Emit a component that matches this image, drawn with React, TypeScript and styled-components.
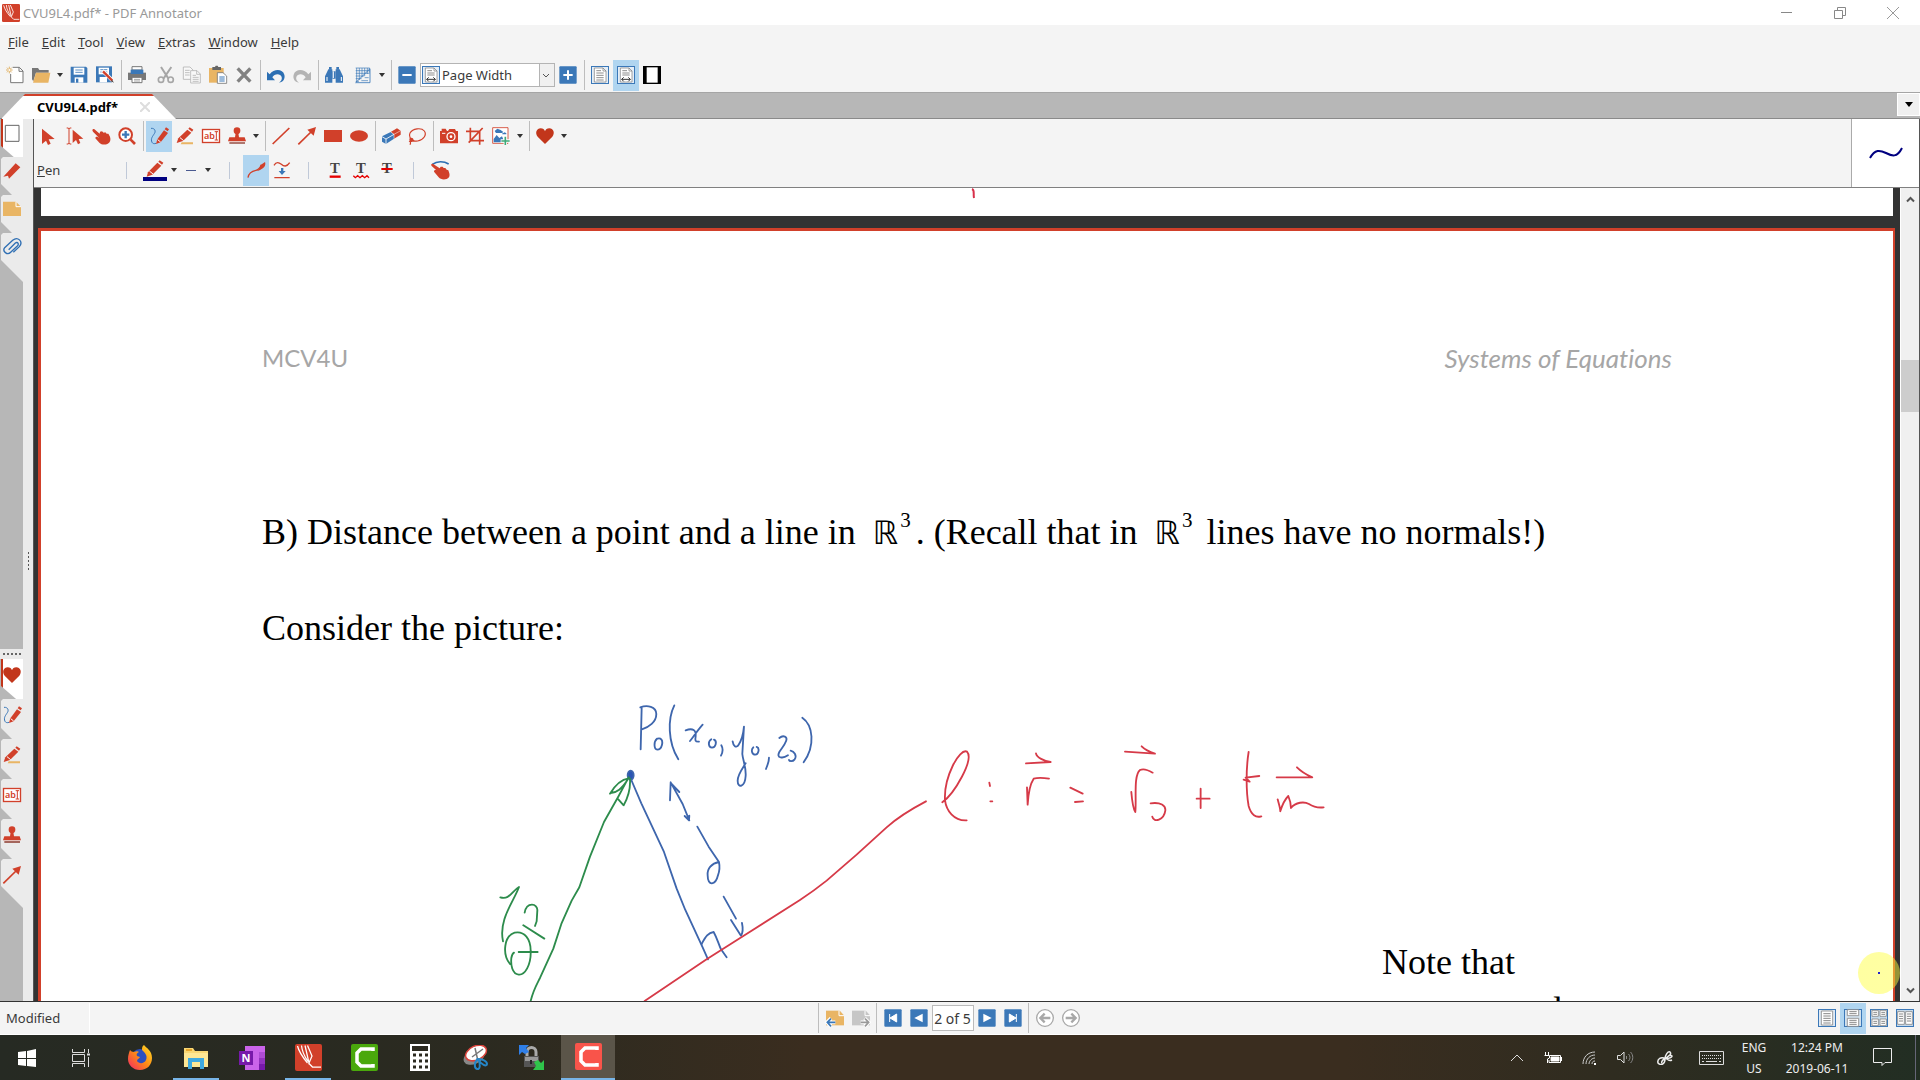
import React from 'react';
import styled, { createGlobalStyle, css } from 'styled-components';

const RED = '#d1402a';
const BLUE = '#3b78b8';
const GREY = '#a6a6a6';
const DARK = '#454545';
const UI = `'Noto Sans', 'Open Sans', sans-serif`;

const Global = createGlobalStyle`
  *, *::before, *::after { box-sizing: border-box; }
  html, body { margin: 0; height: 100%; }
  body { font-family: ${UI}; font-size: 13px; color: #3a3a3a; background: #333; overflow: hidden; }
  button, input, select { font: inherit; color: inherit; margin: 0; padding: 0; border: 0; background: none; border-radius: 0; }
  svg { display: block; flex: none; }
`;

/* ---------- icons, drawn on a 54 unit grid ---------- */

const Glyph = styled.svg.attrs({ viewBox: '0 0 54 54', fill: 'none', 'aria-hidden': true })<{ $size?: number }>`
  width: ${p => p.$size ?? 18}px;
  height: ${p => p.$size ?? 18}px;
  overflow: visible;
`;

const pencil = (
  <>
    <path d="M18 51l4-14L42 10l12 8-22 28z" fill={RED} />
    <path d="M44 7l4-6 9 6-4 6z" fill={RED} />
    <path d="M23 38l9 7" stroke="#fff" strokeWidth="3" />
  </>
);

const pageLines = (
  <>
    <rect x="1.500" y="1.500" width="51" height="51" fill="#e4eef8" stroke={BLUE} strokeWidth="3" />
    <path d="M10 6h26l9 9v33H10z" fill="#fff" stroke="#777" strokeWidth="2" />
    <path d="M36 6v9h9" stroke="#777" strokeWidth="2" />
  </>
);

const art: Record<string, React.ReactNode> = {
  app: (
    <>
      <rect width="54" height="54" rx="4" fill={RED} />
      <path d="M5 4c3 12 10 22 20 34M13 3c1 12 6 22 13 32M20 3l8 35 6-14L25 3M27 38l8 8h17" stroke="#fff" strokeWidth="2.500" />
    </>
  ),
  fresh: (
    <>
      <path d="M20 4h20l11 11v35H14V24" fill="#fff" stroke="#777" strokeWidth="3" />
      <path d="M39 4v12h12" stroke="#777" strokeWidth="3" />
      <path d="M10 2v20M0 12h20M3 5l14 14M17 5L3 19" stroke="#e0a84e" strokeWidth="2.500" />
      <circle cx="10" cy="12" r="3" fill="#fff" />
    </>
  ),
  open: (
    <>
      <path d="M0 6h18l4 6h28v8H12L4 46 0 40z" fill="#777" />
      <path d="M12 20h43l-6 30H3z" fill="#e9b564" />
    </>
  ),
  save: (
    <>
      <path d="M2 2h46l4 4v44H2z" fill={BLUE} />
      <path d="M11 5h32v21H11z" fill="#fff" />
      <path d="M16 12h22M16 19h22" stroke={BLUE} strokeWidth="2.500" />
      <path d="M14 34h26v16H14z" fill="#fff" />
      <path d="M18 38h7v12h-7z" fill={BLUE} />
    </>
  ),
  saveAs: (
    <>
      <path d="M0 1h48v48H0z" fill={BLUE} />
      <path d="M8 5h31v20H8z" fill="#fff" />
      <path d="M13 11h21M13 18h21" stroke={BLUE} strokeWidth="2.500" />
      <path d="M11 33h22v16H11z" fill="#fff" />
      <path d="M19 14l31 30" stroke="#fff" strokeWidth="11" />
      <path d="M21 16l28 28" stroke={RED} strokeWidth="7" />
      <path d="M48 41l6 9-9-4z" fill="#444" />
    </>
  ),
  print: (
    <>
      <path d="M0 20h54v22H0z" fill="#777" />
      <path d="M12 2h30v10H12z" fill="#fff" stroke="#777" strokeWidth="3" />
      <path d="M8 11h38v13H8z" fill={BLUE} />
      <path d="M12 34h30v16H12z" fill="#fff" stroke="#777" strokeWidth="3" />
      <path d="M18 40h18M18 45h18" stroke="#777" strokeWidth="2" />
    </>
  ),
  cut: (
    <g stroke={GREY} strokeWidth="5">
      <path d="M12 3l22 34M43 3L20 37" strokeWidth="6" />
      <circle cx="12" cy="41" r="8" />
      <circle cx="41" cy="41" r="8" />
    </g>
  ),
  copy: (
    <g stroke="#b4b4b4" strokeWidth="2.500">
      <path d="M1 3h20l9 9v28H1z" fill="#f8f8f8" />
      <path d="M6 13h14M6 20h14M6 27h14" />
      <path d="M23 14h19l10 10v27H23z" fill="#f8f8f8" />
      <path d="M41 14v11h11M29 28h10M29 34h18M29 40h18M29 46h18" />
    </g>
  ),
  paste: (
    <>
      <path d="M0 6h44v44H0z" fill="#e9b564" />
      <path d="M10 3h8l2-4h6l2 4h8v9H10z" fill="#666" />
      <path d="M25 20h17l11 10v22H25z" fill="#fff" stroke="#777" strokeWidth="2.500" />
      <path d="M31 33h16M31 39h16M31 45h16" stroke={BLUE} strokeWidth="3" />
    </>
  ),
  remove: <path d="M8 7l38 40M46 7L8 47" stroke="#828282" strokeWidth="10" />,
  undo: <path d="M0 17v26h24l-8-9c6-12 24-13 28-1 2 7-2 13-8 17 13-2 19-13 16-24C47 9 22 7 8 25z" fill="#2c6fb3" />,
  redo: <path d="M54 17v26H30l8-9c-6-12-24-13-28-1-2 7 2 13 8 17C5 48-1 37 2 26 7 9 32 7 46 25z" fill="#b4b4b4" />,
  find: (
    <>
      <path d="M10 10h12v40H0V31zM44 10H32v40h22V31z" fill={BLUE} />
      <path d="M12 3h8v8h-8zM34 3h8v8h-8zM22 16h10v22H22z" fill={BLUE} />
      <path d="M25 16v20M6 33v12M49 33v12" stroke="#fff" strokeWidth="3" />
    </>
  ),
  grid: (
    <>
      <path d="M5 6h42M5 14h42M5 22h42M5 30h26M5 38h18M5 46h10M8 6v42M16 6v36M24 6v28M32 6v24M40 6v18M46 6v14" stroke={BLUE} strokeWidth="2" />
      <path d="M5 50L48 8v42z" stroke={BLUE} strokeWidth="2.500" />
      <path d="M22 44h20M32 35h12" stroke={BLUE} strokeWidth="2" />
    </>
  ),
  minus: (
    <>
      <rect x="1" y="1" width="52" height="52" rx="3" fill={BLUE} />
      <path d="M13 27h28" stroke="#fff" strokeWidth="6" />
    </>
  ),
  plus: (
    <>
      <rect x="1" y="1" width="52" height="52" rx="3" fill={BLUE} />
      <path d="M13 27h28M27 13v28" stroke="#fff" strokeWidth="6" />
    </>
  ),
  fullPage: (
    <>
      {pageLines}
      <path d="M16 14h14M16 21h22M16 28h22M16 35h22M16 42h22" stroke="#777" strokeWidth="2.500" />
    </>
  ),
  pageWidth: (
    <>
      {pageLines}
      <path d="M16 14h14M16 21h22M16 27h22" stroke="#777" strokeWidth="2.500" />
      <path d="M14 40h26M20 34l-6 6 6 6M34 34l6 6-6 6" stroke="#333" strokeWidth="3" />
    </>
  ),
  blackPage: (
    <>
      <path d="M0 0h54v54H0z" fill="#000" />
      <path d="M11 4h33v46H11z" fill="#fff" />
    </>
  ),
  pointer: <path d="M6 5v46l12-10 6 13 8-4-6-13 18-1z" fill={RED} />,
  textPointer: (
    <>
      <path d="M2 3h4l3 2 3-2h4M2 51h4l3-2 3 2h4M9 5v44" stroke={RED} strokeWidth="3" />
      <path d="M20 8v40l10-9 6 13 7-4-5-12 14-1z" fill={RED} />
    </>
  ),
  hand: (
    <path d="M1 10c1-5 6-5 9-1l13 11 1-6 6-1 5 4 5-1 4 4 5 0 5 9c3 10 1 17-8 22-9 4-19 1-24-4L10 34c0-4 4-6 8-3l3 1L3 14z" fill={RED} />
  ),
  zoomIn: (
    <>
      <circle cx="23" cy="23" r="19" fill="#fff" stroke={RED} strokeWidth="6" />
      <path d="M38 38l13 13" stroke={RED} strokeWidth="8" />
      <path d="M12 23h22M23 12v22" stroke={BLUE} strokeWidth="7" />
    </>
  ),
  pen: (
    <>
      {pencil}
      <path d="M3 4c12-1 15 9 10 16-5 8-12 15-7 26 2 4 7 5 12 3" stroke={BLUE} strokeWidth="3" />
    </>
  ),
  marker: (
    <>
      <path d="M17 46h34v6H14z" fill="#e9b564" />
      <path d="M2 48l5-14L34 8l12 9-25 25z" fill={RED} />
      <path d="M37 5l4-4 11 7-4 6z" fill={RED} />
      <path d="M12 32l11 9" stroke="#fff" strokeWidth="3" />
    </>
  ),
  textBox: (
    <>
      <rect x="1.500" y="7.500" width="51" height="39" fill="#fff" stroke={RED} strokeWidth="4" />
      <text x="6" y="37" fontFamily="Noto Sans, sans-serif" fontSize="27" fontWeight="600" fill={RED}>ab</text>
      <path d="M38 14h10M38 39h10M43 14v25" stroke={RED} strokeWidth="3" />
    </>
  ),
  stamp: (
    <>
      <circle cx="27" cy="11" r="10" fill={RED} />
      <path d="M23 18h8l2 13h-12zM4 31h46l4 12H0z" fill={RED} />
      <path d="M4 48h47" stroke="#8c3a2e" strokeWidth="4" />
    </>
  ),
  line: <path d="M2 51L52 3" stroke={RED} strokeWidth="5" />,
  arrow: (
    <>
      <path d="M1 52L42 12" stroke={RED} strokeWidth="5" />
      <path d="M54 0L47 26 28 8z" fill={RED} />
    </>
  ),
  rect: <path d="M0 9h54v36H0z" fill={RED} />,
  ellipse: <ellipse cx="27" cy="27" rx="27" ry="17" fill={RED} />,
  eraser: (
    <>
      <path d="M0 28l26-13 10 7v13L12 51 0 44z" fill={BLUE} />
      <path d="M26 15l19-11 11 7v12L36 35V22z" fill={RED} />
      <path d="M0 29l12 7 24-14M12 36v15" stroke="#fff" strokeWidth="2.500" />
      <path d="M36 22l20-11M26 15l10 7v13" stroke="#fff" strokeWidth="1.500" />
    </>
  ),
  lasso: <path d="M20 42C7 38 1 28 6 18 14 4 40 1 49 12c8 11-2 27-20 30-9 1-20 1-23-4-2-5 8-6 9 0 1 6-7 6-12 4 5 2 6 5 3 11" stroke={RED} strokeWidth="3.500" />,
  camera: (
    <>
      <path d="M0 12h5V5h12l4 7h3l4-6h17l3 6h6v37H0z" fill={RED} />
      <circle cx="33" cy="29" r="12" fill={RED} stroke="#fff" strokeWidth="4" />
      <circle cx="33" cy="29" r="4" fill="#fff" />
      <path d="M6 19h10" stroke="#fff" strokeWidth="3" />
    </>
  ),
  crop: <path d="M0 13h41v40M13 2v39h41M50 3L8 47" stroke={RED} strokeWidth="5" />,
  picture: (
    <>
      <path d="M2 2h46v47H2z" fill="#fff" stroke={RED} strokeWidth="2.500" />
      <path d="M5 46V36l9-12 8 9 8-5 8 18zM8 12l8-7 10 4 8 6-4 3H12zM30 20l8-4 5 3v3H31z" fill={BLUE} />
      <path d="M26 42h28M40 28v26" stroke="#fff" strokeWidth="10" />
      <path d="M28 42h25M40 29v25" stroke="#3fa878" strokeWidth="5" />
    </>
  ),
  heart: <path d="M27 51L5 29C-4 18 2 4 14 4c7 0 11 4 13 9 2-5 6-9 13-9 12 0 18 14 9 25z" fill="#c2361b" />,
  curve: (
    <>
      <path d="M3 50c2-14 13-20 24-22s13-9 16-17" stroke={RED} strokeWidth="4" />
      <path d="M26 30c12-2 12-10 16-19l12-8c3 8-1 17-9 20-6 5-12 7-19 7z" fill={RED} />
    </>
  ),
  smooth: (
    <>
      <path d="M3 13c7-12 15-9 22-3s16 9 25-5M4 50h46" stroke={RED} strokeWidth="4" />
      <path d="M24 21h7v9h7L27 42 17 30h7z" fill={BLUE} />
    </>
  ),
  swipe: (
    <>
      <path d="M4 10C18 0 38 0 53 9" stroke="#2c6fb3" strokeWidth="5" />
      <path d="M0 11c3-4 7-3 10 0l16 11 3-5 6 0 3 4 5 0 4 5 5 2 3 9c2 8 0 14-8 17-9 3-19 1-24-5L9 32c0-4 3-6 7-4L2 15z" fill={RED} />
    </>
  ),
  bookmark: <path d="M1 44L38 4l14 12L18 50l-3-9z" fill={RED} />,
  note: (
    <>
      <path d="M0 5h39l15 15v28H0z" fill="#e9b564" />
      <path d="M39 5v15h15" stroke="#fff" strokeWidth="3" />
    </>
  ),
  clip: <path d="M17 35l20-20c7-5 12 3 6 9L23 43C13 53-3 40 5 29L29 7c15-13 33 3 20 19L31 43" stroke="#2f6fb3" strokeWidth="4" />,
  thumbs: <path d="M7 4h41v48H7z" fill="#fff" stroke="#666" strokeWidth="3" />,
  noteBack: (
    <>
      <path d="M0 5h54v44H0z" fill="#e9b564" />
      <path d="M39 2h16v18z" fill="#f4f4f4" />
      <path d="M39 5v15h15" stroke="#fff" strokeWidth="3" />
      <path d="M28 40H4M15 28L3 40l12 12" stroke="#fff" strokeWidth="11" />
      <path d="M28 40H4M15 29L4 40l11 12" stroke={BLUE} strokeWidth="5" />
    </>
  ),
  noteNext: (
    <>
      <path d="M0 5h54v44H0z" fill="#c6c6c6" />
      <path d="M39 2h16v18z" fill="#f4f4f4" />
      <path d="M39 5v15h15" stroke="#fff" strokeWidth="3" />
      <path d="M26 40h24M38 28l12 12-12 12" stroke="#fff" strokeWidth="11" />
      <path d="M26 40h24M39 29l11 11-11 12" stroke="#999" strokeWidth="5" />
    </>
  ),
  first: (
    <>
      <rect x="1" y="1" width="52" height="52" rx="3" fill={BLUE} />
      <path d="M17 15v24M38 15v24L18 27z" fill="#fff" stroke="#fff" strokeWidth="3" />
    </>
  ),
  prev: (
    <>
      <rect x="1" y="1" width="52" height="52" rx="3" fill={BLUE} />
      <path d="M38 14v26L13 27z" fill="#fff" />
    </>
  ),
  next: (
    <>
      <rect x="1" y="1" width="52" height="52" rx="3" fill={BLUE} />
      <path d="M16 14v26l25-13z" fill="#fff" />
    </>
  ),
  last: (
    <>
      <rect x="1" y="1" width="52" height="52" rx="3" fill={BLUE} />
      <path d="M37 15v24M16 15v24l20-12z" fill="#fff" stroke="#fff" strokeWidth="3" />
    </>
  ),
  back: (
    <g stroke="#a8a8a8">
      <circle cx="27" cy="27" r="25" fill="#fff" strokeWidth="4" />
      <path d="M43 27H14M26 14L13 27l13 13" strokeWidth="7" />
    </g>
  ),
  forward: (
    <g stroke="#a8a8a8">
      <circle cx="27" cy="27" r="25" fill="#fff" strokeWidth="4" />
      <path d="M11 27h29M28 14l13 13-13 13" strokeWidth="7" />
    </g>
  ),
  single: (
    <>
      <rect x="1.500" y="1.500" width="51" height="51" fill="#dfeaf5" stroke={BLUE} strokeWidth="3" />
      <path d="M10 6h34v42H10z" fill="#fff" stroke="#888" strokeWidth="2.500" />
      <path d="M16 14h22M16 21h22M16 28h22M16 35h22M16 42h22" stroke="#888" strokeWidth="3" />
    </>
  ),
  continuous: (
    <>
      <rect x="1.500" y="1.500" width="51" height="51" fill="#d3e2ee" stroke={BLUE} strokeWidth="3" />
      <path d="M10 2h34v18H10zM10 28h34v24H10z" fill="#fff" stroke="#888" strokeWidth="2.500" />
      <path d="M16 8h22M16 14h22M16 34h22M16 40h22M16 46h22" stroke="#888" strokeWidth="3" />
    </>
  ),
  grid4: (
    <>
      <rect x="1.500" y="1.500" width="51" height="51" fill="#c6d9ea" stroke={BLUE} strokeWidth="3" />
      <path d="M6 4h19v18H6zM30 4h19v18H30zM6 30h19v20H6zM30 30h19v20H30z" fill="#fff" stroke="#888" strokeWidth="2.500" />
      <path d="M10 10h11M10 16h11M34 10h11M34 16h11M10 37h11M10 43h11M34 37h11M34 43h11" stroke="#888" strokeWidth="3" />
    </>
  ),
  facing: (
    <>
      <rect x="1.500" y="1.500" width="51" height="51" fill="#c6d9ea" stroke={BLUE} strokeWidth="3" />
      <path d="M5 8h20v38H5zM29 8h20v38H29z" fill="#fff" stroke="#888" strokeWidth="2.500" />
      <path d="M9 15h12M9 22h12M9 29h12M9 36h12M33 15h12M33 22h12M33 29h12M33 36h12" stroke="#888" strokeWidth="3" />
    </>
  ),
};

const markT = <text x="27" y="35" textAnchor="middle" fontFamily="Liberation Serif, serif" fontSize="44" fontWeight="700" fill={DARK}>T</text>;
art.underline = <>{markT}<path d="M11 47h33" stroke="#e60000" strokeWidth="7" /></>;
art.squiggle = <>{markT}<path d="M4 44l6 6 7-6 7 6 7-6 7 6 7-6 6 6" stroke="#e60000" strokeWidth="4" /></>;
art.strike = <>{markT}<path d="M10 24h34" stroke="#e60000" strokeWidth="6" /></>;

const Icon = ({ name, size }: { name: string; size?: number }) => <Glyph $size={size}>{art[name]}</Glyph>;

/* ---------- window frame ---------- */

const Window = styled.div`
  display: flex;
  flex-direction: column;
  height: 100vh;
  background: #f4f4f4;
`;

const TitleBar = styled.header`
  display: flex;
  align-items: center;
  height: 25px;
  flex: none;
  padding: 0 1px 0 2px;
  gap: 3px;
  background: #fff;
  color: #999;
`;

const WindowButtons = styled.div`
  display: flex;
  margin-left: auto;
`;

const WindowButton = styled.button`
  display: grid;
  place-items: center;
  width: 53px;
  height: 25px;
`;

const MenuBar = styled.nav`
  display: flex;
  align-items: center;
  height: 34px;
  flex: none;
  padding-left: 1px;
`;

const MenuItem = styled.button`
  padding: 0 6px 0 7px;
  &::first-letter { text-decoration: underline; }
`;

const ToolRow = styled.div<{ $indent?: number }>`
  display: flex;
  align-items: center;
  height: ${p => (p.$indent ? 34 : 32)}px;
  flex: none;
  padding-left: ${p => p.$indent ?? 2}px;
`;

const ToolButton = styled.button<{ $on?: boolean }>`
  display: grid;
  place-items: center;
  width: 26px;
  height: 31px;
  flex: none;
  ${p => p.$on && css`background: #b0d5f0;`}
`;

const CaretButton = styled.button`
  width: 12px;
  height: 31px;
  display: grid;
  place-items: center;
  &::before {
    content: '';
    border: 3px solid transparent;
    border-top: 4px solid #333;
    border-bottom: 0;
  }
`;

const Divider = styled.span<{ $short?: boolean }>`
  display: flex;
  justify-content: center;
  width: 6px;
  height: ${p => (p.$short ? 17 : 30)}px;
  flex: none;
  &::before {
    content: '';
    width: 1px;
    background: ${p => (p.$short ? '#c0c9d8' : '#bdbdbd')};
  }
`;

const Spacer = styled.span`
  width: 3px;
`;

const ZoomBox = styled.label`
  display: flex;
  align-items: center;
  width: 135px;
  height: 24px;
  padding-left: 1px;
  border: 1px solid #b4b4b4;
  background: linear-gradient(90deg, #fff 118px, #b4b4b4 118px, #b4b4b4 119px, #f0f0f0 119px);
`;

const ZoomSelect = styled.select`
  appearance: none;
  flex: 1;
  min-width: 0;
  height: 22px;
  padding-left: 2px;
  outline: 0;
`;

const ZoomArrow = styled.svg`
  width: 6px;
  height: 5px;
  margin-right: 5px;
`;

/* ---------- document tabs ---------- */

const TabStrip = styled.div`
  display: flex;
  align-items: flex-end;
  justify-content: space-between;
  height: 27px;
  flex: none;
  margin-top: 1px;
  padding-left: 2px;
  background: #b7b7b7;
  border-top: 1px solid #a5a5a5;
  border-bottom: 1px solid #8a8a8a;
`;

const DocTab = styled.div`
  display: flex;
  align-items: center;
  width: 174px;
  height: 25px;
  margin-bottom: -1px;
  padding: 0 26px 0 35px;
  justify-content: space-between;
  color: #000;
  font-weight: 700;
  background: linear-gradient(#d1402a 2px, #fff 2px);
  clip-path: polygon(0 100%, 0 24px, 23px 0, 150px 0, 100% 100%);
`;

const TabClose = styled.button`
  width: 10px;
  height: 10px;
`;

const TabMenu = styled.button`
  display: grid;
  place-items: center;
  width: 23px;
  height: 23px;
  margin-bottom: 2px;
  background: #f0f0f0;
  border: 1px solid #fff;
  &::before {
    content: '';
    border: 4px solid transparent;
    border-top: 5px solid #000;
    border-bottom: 0;
  }
`;

const Body = styled.div`
  display: flex;
  flex: 1;
  min-height: 0;
`;

/* ---------- side panel ---------- */

const Sidebar = styled.aside`
  display: flex;
  flex: none;
  width: 33px;
  background: #ebebeb;
`;

const TabColumn = styled.div`
  display: flex;
  flex-direction: column;
  width: 23px;
  background: #b7b7b7;
`;

const SideTab = styled.button<{ $step: number; $kind?: 'first' | 'last' }>`
  display: flex;
  flex: none;
  justify-content: center;
  height: ${p => p.$step}px;
  padding-top: ${p => (p.$step === 40 ? 7 : 5)}px;
  background: #ebebeb;
  clip-path: polygon(0 2px, 2px 0, 100% 0, 100% 100%, 11px 100%, 0 calc(100% - 11px));
  ${p => p.$kind === 'first' && css`
    height: 46px;
    margin-bottom: ${p.$step - 46}px;
    position: relative;
    background: linear-gradient(90deg, #c2361b 2px, #fff 2px);
    clip-path: polygon(0 0, 100% 0, 100% 100%, 0 27px);
  `}
  ${p => p.$kind === 'last' && css`
    height: 49px;
    clip-path: polygon(0 2px, 2px 0, 100% 0, 100% 100%, 0 27px);
  `}
`;

const SideTabs = styled.div<{ $lower?: boolean }>`
  display: flex;
  flex-direction: column;
  flex: ${p => (p.$lower ? '0 0 342px' : '1')};
  padding-left: 1px;
`;

const PanelGrip = styled.div`
  height: 10px;
  display: grid;
  place-items: center;
  background: #ebebeb;
  &::before {
    content: '';
    width: 18px;
    height: 2px;
    background: repeating-linear-gradient(90deg, #666 0 2px, transparent 2px 4px);
  }
`;

const Splitter = styled.div`
  flex: 1;
  display: grid;
  justify-content: center;
  padding-top: 433px;
  &::before {
    content: '';
    width: 1px;
    height: 19px;
    background: repeating-linear-gradient(#555 0 2px, transparent 2px 4px);
  }
`;

/* ---------- annotation tools ---------- */

const Main = styled.main`
  display: flex;
  flex-direction: column;
  flex: 1;
  min-width: 0;
  border-left: 1px solid #555;
  border-right: 1px solid #555;
`;

const ToolPanel = styled.div`
  display: flex;
  flex: none;
  border-bottom: 1px solid #808080;
`;

const ToolRows = styled.div`
  flex: 1;
`;

const StrokePreview = styled.div`
  display: grid;
  place-items: center;
  width: 68px;
  background: #fff;
  border-left: 1px solid #aaa;
`;

const ToolName = styled.label`
  width: 86px;
  display: block;
  &::first-letter { text-decoration: underline; }
`;

const PenGroup = styled.div`
  display: flex;
  align-items: center;
  padding: 0 12px 0 13px;
`;

const ModeGroup = styled.div`
  display: flex;
  padding: 0 10px 0 11px;
`;

const PenColor = styled.button`
  display: flex;
  flex-direction: column;
  align-items: center;
  width: 26px;
  &::after {
    content: '';
    width: 24px;
    height: 4px;
    margin-top: -1px;
    background: #000080;
  }
`;

const PenWidth = styled.button`
  width: 22px;
  height: 31px;
  display: grid;
  place-items: center;
  &::before {
    content: '';
    width: 10px;
    height: 1px;
    background: #4a5a90;
  }
`;

/* ---------- page view ---------- */

const Viewer = styled.div`
  display: flex;
  flex: 1;
  min-height: 0;
  background: #333;
`;

const Pages = styled.div`
  flex: 1;
  min-width: 0;
  overflow: hidden;
  padding: 0 5px 0 4px;
`;

const PreviousPage = styled.div`
  height: 28px;
  margin: 0 2px 12px 3px;
  background: #fff;
`;

const TailStroke = styled.svg`
  width: 6px;
  height: 11px;
  margin-left: 930px;
`;

const Page = styled.article`
  position: relative;
  height: 2000px;
  padding: 108px 221px;
  background: #fff;
  border: 3px solid #d1402a;
  border-right-width: 2px;
  color: #000;
  font: 36px/48px 'Liberation Serif', serif;
`;

const PageHeader = styled.header`
  display: flex;
  justify-content: space-between;
  color: #a6a6a6;
  font: 24px/38px Lato, sans-serif;
  font-variant-ligatures: none;
  em { font-size: 26px; }
`;

const Heading = styled.p`
  margin: 131px 0 0;
  white-space: pre;
`;

const Paragraph = styled.p`
  margin: 48px 0 0;
`;

const SideNote = styled.p`
  margin: 286px 0 0;
  padding-left: 1120px;
  white-space: pre;
`;

const Reals = styled.span`
  font-family: 'Liberation Serif', 'DejaVu Sans', serif;
  font-size: 32px;
  line-height: 0;
  margin: 0 5px 0 8px;
  sup {
    font: 21px/0 'Liberation Serif', serif;
    vertical-align: 17px;
    margin-left: 2px;
  }
`;

const Ink = styled.svg`
  position: absolute;
  left: 0;
  top: 0;
`;

const Scrollbar = styled.div`
  display: flex;
  flex-direction: column;
  justify-content: space-between;
  align-items: center;
  width: 19px;
  flex: none;
  background: #f0f0f0;
  border-left: 1px solid #fff;
`;

const ScrollButton = styled.button`
  display: grid;
  place-items: center;
  width: 18px;
  height: 22px;
`;

const Thumb = styled.div`
  width: 100%;
  height: 52px;
  margin: 150px 0 auto;
  background: #cdcdcd;
`;

const CursorHalo = styled.div`
  position: fixed;
  right: 20px;
  bottom: 86px;
  width: 42px;
  height: 42px;
  border-radius: 50%;
  background: radial-gradient(#22c 0 1px, rgba(255, 255, 60, 0.48) 1px);
`;

/* ---------- status bar ---------- */

const StatusBar = styled.footer`
  display: grid;
  grid-template-columns: 1fr auto 1fr;
  align-items: center;
  flex: none;
  height: 34px;
  border-top: 1px solid #333;
  border-bottom: 1px solid #fff;
`;

const StatusText = styled.span`
  width: 90px;
  padding: 6px;
  border-right: 1px solid #fff;
`;

const PageNav = styled.nav`
  display: flex;
  align-items: center;
  padding-right: 21px;
`;

const PageInput = styled.input`
  width: 42px;
  height: 26px;
  text-align: center;
  font-size: 14px;
  background: #fff;
  border: 1px solid #bbb;
`;

const ViewModes = styled.div`
  display: flex;
  justify-content: flex-end;
  padding-right: 2px;
`;

/* ---------- taskbar ---------- */

const Taskbar = styled.footer`
  display: flex;
  flex: none;
  height: 45px;
  color: #eee;
  background: linear-gradient(90deg, #262a23, #2b2a20 25%, #3a2d1f 42%, #3a2d1f 70%, #2f2c20 84%, #222e23);
`;

const Tasks = styled.div`
  display: flex;
  gap: 2px;
  margin-left: 5px;
`;

const Task = styled.button<{ $state?: 'open' | 'active' }>`
  display: grid;
  place-items: center;
  width: 54px;
  height: 45px;
  ${p => p.$state === 'open' && css`
    background: linear-gradient(#78b5e8, #78b5e8) center bottom / 46px 2px no-repeat;
  `}
  ${p => p.$state === 'active' && css`
    background: #5b5549;
    border-bottom: 2px solid #78b5e8;
  `}
`;

const Tray = styled.div`
  display: flex;
  align-items: center;
  margin-left: auto;
  padding-right: 13px;
  border-right: 1px solid #667;
  margin-right: 4px;
`;

const TrayButton = styled.button<{ $w: number }>`
  display: grid;
  place-items: center;
  width: ${p => p.$w}px;
  height: 45px;
`;

const TrayText = styled.button<{ $w: number }>`
  width: ${p => p.$w}px;
  font-size: 12px;
  line-height: 21px;
  text-align: center;
`;

const tasks: { label: string; state?: 'open' | 'active'; icon: React.ReactNode }[] = [
  {
    label: 'Firefox',
    icon: (
      <svg width="26" height="26" viewBox="0 0 26 26">
        <defs>
          <linearGradient id="fox" x1="1" y1="0" x2="0" y2="1">
            <stop offset="0" stopColor="#ffe226" /><stop offset=".5" stopColor="#ff8a16" /><stop offset="1" stopColor="#f0246a" />
          </linearGradient>
        </defs>
        <circle cx="13" cy="13" r="9" fill="#2b4fc0" />
        <path d="M3 5c1 1 2 2 4 2 2-1 4-1 5 0-2 1-3 2-2 4l3 1c-1 2-3 2-3 4 2 3 7 3 9-1 2-5-2-8-4-10 0-2 0-4 2-5 2 3 8 5 8 13 0 7-5 12-12 12S1 20 1 14c0-4 1-6 2-9z" fill="url(#fox)" />
      </svg>
    ),
  },
  {
    label: 'File Explorer',
    state: 'open',
    icon: (
      <svg width="24" height="22" viewBox="0 0 24 22">
        <path d="M0 1h9l2 3h13v16H0z" fill="#f8d775" /><path d="M0 6h24v14H0z" fill="#fde694" /><path d="M2 3h6" stroke="#e8a72e" strokeWidth="2" />
        <path d="M4 22V11h16v11h-4v-7H8v7z" fill="#3fa9e0" />
      </svg>
    ),
  },
  {
    label: 'OneNote',
    icon: (
      <svg width="26" height="26" viewBox="0 0 26 26">
        <path d="M6 1h20v24H6z" fill="#ca64ea" /><path d="M20 7h6v6h-6z" fill="#ae4bd5" /><path d="M20 13h6v6h-6z" fill="#9332bf" /><path d="M20 19h6v6h-6z" fill="#7719aa" />
        <path d="M0 6h14v14H0z" fill="#7719aa" />
        <text x="7" y="17" textAnchor="middle" fontFamily="Noto Sans, sans-serif" fontSize="11" fontWeight="700" fill="#fff">N</text>
      </svg>
    ),
  },
  { label: 'PDF Annotator', state: 'open', icon: <Icon name="app" size={27} /> },
  {
    label: 'Camtasia',
    icon: (
      <svg width="27" height="27" viewBox="0 0 27 27">
        <rect width="27" height="27" rx="2" fill="#4aa80c" /><path d="M22 7V5H10L6 9v9l4 4h12v-2" stroke="#fff" strokeWidth="3.500" fill="none" />
      </svg>
    ),
  },
  {
    label: 'Calculator',
    icon: (
      <svg width="20" height="27" viewBox="0 0 20 27">
        <path d="M0 0h20v27H0z" fill="#fff" /><path d="M2 2h16v5H2z" fill="#2c2a20" />
        <path d="M3 11h15M3 17h15M3 23h15" stroke="#2c2a20" strokeWidth="3" strokeDasharray="3 3" />
      </svg>
    ),
  },
  {
    label: 'Snipping Tool',
    icon: (
      <svg width="26" height="26" viewBox="0 0 26 26" fill="none">
        <ellipse cx="11" cy="12" rx="11" ry="7" fill="#888" transform="rotate(-25 11 12)" />
        <ellipse cx="13" cy="8" rx="11" ry="7" fill="#fff" stroke="#d8433b" strokeWidth="1.500" transform="rotate(-25 13 8)" />
        <path d="M12 3l3 13M20 4L9 12" stroke="#777" strokeWidth="1.500" />
        <path d="M15 14c-4 3-4 9-1 10s4-5 1-10c4 0 9 2 9 5s-6 1-9-5" stroke="#2586c8" strokeWidth="2" />
      </svg>
    ),
  },
  {
    label: 'VPN',
    icon: (
      <svg width="26" height="26" viewBox="0 0 26 26" fill="none">
        <path d="M8 12V7c0-6 9-6 9 0v5" stroke="#aaa" strokeWidth="3" />
        <path d="M5 11h15v11H5z" fill="#555" /><path d="M6 12h13v4H6z" fill="#999" /><path d="M12 15v4" stroke="#222" strokeWidth="2" />
        <path d="M0 0h10L7 3l3 4-4 2-3-2-3 3z" fill="#2f7fe8" /><path d="M25 25H14l3-4-2-4 4-2 3 3 3-3z" fill="#2fc44b" />
      </svg>
    ),
  },
  {
    label: 'Camtasia Recorder',
    state: 'active',
    icon: (
      <svg width="27" height="27" viewBox="0 0 27 27">
        <rect width="27" height="27" rx="2" fill="#f9544a" /><path d="M22 7V5H10L6 9v9l4 4h12v-2" stroke="#fff" strokeWidth="3.500" fill="none" />
      </svg>
    ),
  },
];

const Tool = ({ name, label, on }: { name: string; label: string; on?: boolean }) => (
  <ToolButton type="button" aria-label={label} $on={on}><Icon name={name} /></ToolButton>
);

const More = ({ of }: { of: string }) => <CaretButton type="button" aria-label={`${of} options`} />;

const PenArt = () => (
  <Glyph>
    <path d="M2 50l4-13L34 8l12 9-27 27z" fill={RED} />
    <path d="M37 5l4-4 11 7-4 6z" fill={RED} />
    <path d="M10 33l11 9" stroke="#fff" strokeWidth="3" />
  </Glyph>
);

const Handwriting = () => (
  <Ink width="1400" height="774" viewBox="41 231 1400 774" fill="none" strokeLinecap="round" strokeLinejoin="round" role="img" aria-label="Sketch of the distance from a point to a line">
    <g transform="translate(480 690) scale(.3333)" strokeWidth="5.500">
      <g stroke="#3e66ad">
        <path d="M485 55l-3 123M481 52c20-8 48-3 48 20 0 24-22 40-45 47" />
        <path d="M531 146c-10 8-10 32 1 33 14 0 20-27 9-33-4-2-8 0-10 0" />
        <path d="M583 46c-20 40-20 110 12 162" />
        <path d="M617 121c22-8 32 0 30 18-2 12-2 17 10 16M668 104c-16 18-32 42-38 49" />
        <path d="M694 148c-12 8-8 25 2 25 12 0 16-20 6-24M724 166c6 10 4 22-1 31" />
        <path d="M758 154c2 14 10 22 18 10 8-12 14-32 16-54l-5 82c2 20 12 40 10 66-2 34-24 38-24 14 0-18 14-36 24-52" />
        <path d="M820 172c-8 8-4 22 6 22s14-20 4-23M867 203c0 12-4 22-9 34" />
        <path d="M898 144c12-10 26-4 20 10-4 12-14 22-20 32-4 8-4 16 4 16 8 2 16-2 22-6M932 182c10 2 20 14 12 26-6 8-16 6-17 2" />
        <path d="M967 83c32 22 40 84 4 134" />
        <ellipse cx="452" cy="256" rx="9" ry="14" fill="#2b55b4" />
        <path d="M454 270L484 340L552 486L590 596L616 660L668 772L684 808" />
        <path d="M665 762c12-22 20-34 36-36 10 18 14 34 22 52l17 24" />
        <path d="M570 331l2-52 26 27M572 277l36 65 20 49M614 378l13 13 1-14M652 410l34 60 31 46c-22 4-36 20-34 40 0 34 24 30 31 0 6-16 5-30 3-40M731 620l37 66M753 690l30 47c8-12 6-24 3-38" />
      </g>
      <path d="M152 933C160 900 170 884 180 864L220 776L244 702L275 632L298 592L330 500L372 396L416 318L446 262M390 311c12-20 28-42 56-46M392 309c20-2 32-12 50-38M450 266c2 30-8 60-19 80l-16-18" stroke="#2d8c4c" />
      <path d="M61 622c28 8 34-18 56-31-16 44-62 98-48 163M134 668c6-34 40-28 38-6l-2 32-5 14M130 706l63 40M90 822c-24-30-18-84 14-94 30-6 48 20 48 54 2 44-18 74-36 72-20-2-24-30-22-50 2-10 4-14 8-16M116 786h57" stroke="#2d8c4c" />
      <path d="M494 933L680 808L790 738L960 630Q1000 604 1040 572L1130 494L1220 412Q1262 374 1338 334" stroke="#d63a48" />
    </g>
    <g transform="translate(900 720) scale(.3333)" stroke="#d63a48" strokeWidth="5.500">
      <path d="M127 247c36-26 96-128 74-152-22-12-70 76-66 146 4 30 26 62 65 60M268 188l2 10M271 244h6" />
      <path d="M378 130l74-4c-20-2-42-14-44-26M381 202l2 52c2-36 10-66 18-78 14-4 34-2 46 0M511 203l37 18M525 246l24-2" />
      <path d="M675 95l90 6c-12-4-30-12-40-22M694 216c2 24 4 48 12 60 4-36-6-110 14-126 12-6 28 2 38 8M752 250c30-4 46 6 44 22-4 28-34 38-39 18" />
      <path d="M902 206v58M890 236h39M1046 96c-8 50-8 118 0 162 8 28 22 36 38 31M1031 179l18 6-12-12 41-5" />
      <path d="M1130 172h107c-18-8-32-16-46-30M1133 238c4 16 8 26 8 36 6-20 16-38 24-46 6 14 8 24 8 36 14-18 40-20 54-12 12 8 26 12 44 10" />
    </g>
  </Ink>
);

const menus = ['File', 'Edit', 'Tool', 'View', 'Extras', 'Window', 'Help'];

export default function App() {
  return (
    <Window>
      <Global />
      <TitleBar>
        <Icon name="app" />
        <span>CVU9L4.pdf* - PDF Annotator</span>
        <WindowButtons>
          <WindowButton type="button" aria-label="Minimize"><svg width="11" height="11"><path d="M0 5.500h11" stroke="#888" /></svg></WindowButton>
          <WindowButton type="button" aria-label="Restore"><svg width="12" height="12" fill="none" stroke="#888"><path d="M.5 3.500h8v8h-8zM3.500 3V.5h8v8H9" /></svg></WindowButton>
          <WindowButton type="button" aria-label="Close"><svg width="12" height="12" stroke="#999"><path d="M0 0l12 12M12 0L0 12" /></svg></WindowButton>
        </WindowButtons>
      </TitleBar>

      <MenuBar>
        {menus.map(m => <MenuItem type="button" key={m}>{m}</MenuItem>)}
      </MenuBar>

      <ToolRow>
        <Tool name="fresh" label="New" />
        <Tool name="open" label="Open" />
        <More of="Open" />
        <Tool name="save" label="Save" />
        <Tool name="saveAs" label="Save as" />
        <Divider />
        <Tool name="print" label="Print" />
        <Spacer />
        <Tool name="cut" label="Cut" />
        <Tool name="copy" label="Copy" />
        <Tool name="paste" label="Paste" />
        <Tool name="remove" label="Delete" />
        <Divider />
        <Tool name="undo" label="Undo" />
        <Tool name="redo" label="Redo" />
        <Divider />
        <Tool name="find" label="Find" />
        <Spacer />
        <Tool name="grid" label="Grid" />
        <More of="Grid" />
        <Divider />
        <Tool name="minus" label="Zoom out" />
        <ZoomBox>
          <Icon name="pageWidth" />
          <ZoomSelect aria-label="Zoom" defaultValue="Page Width"><option>Page Width</option></ZoomSelect>
          <ZoomArrow viewBox="0 0 6 5" fill="none"><path d="M0 1l3 3 3-3" stroke="#555" /></ZoomArrow>
        </ZoomBox>
        <Tool name="plus" label="Zoom in" />
        <Divider />
        <Tool name="fullPage" label="Full page" />
        <Tool name="pageWidth" label="Page width" on />
        <Tool name="blackPage" label="Full screen" />
      </ToolRow>

      <TabStrip>
        <DocTab>
          <span>CVU9L4.pdf*</span>
          <TabClose type="button" aria-label="Close tab"><svg width="10" height="10" stroke="#ddd" strokeWidth="2"><path d="M0 0l10 10M10 0L0 10" /></svg></TabClose>
        </DocTab>
        <TabMenu type="button" aria-label="Open documents" />
      </TabStrip>

      <Body>
        <Sidebar>
          <TabColumn>
            <SideTabs>
              <SideTab type="button" aria-label="Pages" $step={38} $kind="first"><Icon name="thumbs" /></SideTab>
              <SideTab type="button" aria-label="Bookmarks" $step={38}><Icon name="bookmark" /></SideTab>
              <SideTab type="button" aria-label="Annotations" $step={38}><Icon name="note" /></SideTab>
              <SideTab type="button" aria-label="Attachments" $step={38} $kind="last"><Icon name="clip" /></SideTab>
            </SideTabs>
            <PanelGrip />
            <SideTabs $lower>
              <SideTab type="button" aria-label="Favorites" $step={40} $kind="first"><Icon name="heart" /></SideTab>
              <SideTab type="button" aria-label="Pens" $step={40}><Icon name="pen" /></SideTab>
              <SideTab type="button" aria-label="Markers" $step={40}><Icon name="marker" /></SideTab>
              <SideTab type="button" aria-label="Text boxes" $step={40}><Icon name="textBox" /></SideTab>
              <SideTab type="button" aria-label="Stamps" $step={40}><Icon name="stamp" /></SideTab>
              <SideTab type="button" aria-label="Arrows" $step={40} $kind="last"><Icon name="arrow" /></SideTab>
            </SideTabs>
          </TabColumn>
          <Splitter />
        </Sidebar>

        <Main>
          <ToolPanel>
            <ToolRows>
              <ToolRow $indent={2}>
                <Tool name="pointer" label="Select" />
                <Tool name="textPointer" label="Select text" />
                <Tool name="hand" label="Pan" />
                <Tool name="zoomIn" label="Zoom" />
                <Divider />
                <Tool name="pen" label="Pen" on />
                <Tool name="marker" label="Marker" />
                <Tool name="textBox" label="Text box" />
                <Tool name="stamp" label="Stamp" />
                <More of="Stamp" />
                <Divider />
                <Tool name="line" label="Line" />
                <Tool name="arrow" label="Arrow" />
                <Tool name="rect" label="Rectangle" />
                <Tool name="ellipse" label="Ellipse" />
                <Divider />
                <Tool name="eraser" label="Eraser" />
                <Tool name="lasso" label="Lasso" />
                <Divider />
                <Tool name="camera" label="Snapshot" />
                <Tool name="crop" label="Crop" />
                <Tool name="picture" label="Insert picture" />
                <More of="Picture" />
                <Divider />
                <Tool name="heart" label="Favorites" />
                <More of="Favorites" />
              </ToolRow>
              <ToolRow $indent={3}>
                <ToolName htmlFor="pen-color">Pen</ToolName>
                <Divider $short />
                <PenGroup>
                  <PenColor type="button" id="pen-color" aria-label="Pen color"><PenArt /></PenColor>
                  <More of="Color" />
                  <PenWidth type="button" aria-label="Pen width" />
                  <More of="Width" />
                </PenGroup>
                <Divider $short />
                <ModeGroup>
                  <Tool name="curve" label="Freehand" on />
                  <Tool name="smooth" label="Smooth" />
                </ModeGroup>
                <Divider $short />
                <ModeGroup>
                  <Tool name="underline" label="Underline text" />
                  <Tool name="squiggle" label="Squiggly underline" />
                  <Tool name="strike" label="Strike through" />
                </ModeGroup>
                <Divider $short />
                <ModeGroup>
                  <Tool name="swipe" label="Touch input" />
                </ModeGroup>
              </ToolRow>
            </ToolRows>
            <StrokePreview>
              <svg width="34" height="14" viewBox="0 0 34 14" fill="none"><path d="M1 12C6 3 11 4 17 7s11 5 16-5" stroke="#000080" strokeWidth="2" /></svg>
            </StrokePreview>
          </ToolPanel>

          <Viewer>
            <Pages>
              <PreviousPage>
                <TailStroke viewBox="0 0 6 11" fill="none"><path d="M1 1c3 1 1 5 2 9" stroke="#d8304a" strokeWidth="2" /></TailStroke>
              </PreviousPage>
              <Page>
                <PageHeader>
                  <span>MCV4U</span>
                  <em>Systems of Equations</em>
                </PageHeader>
                <Heading>
                  B) Distance between a point and a line in <Reals>ℝ<sup>3</sup></Reals>. (Recall that in <Reals>ℝ<sup>3</sup></Reals> lines have no normals!)
                </Heading>
                <Paragraph>Consider the picture:</Paragraph>
                <SideNote>{'Note that\n                  d'}</SideNote>
                <Handwriting />
              </Page>
            </Pages>
            <Scrollbar>
              <ScrollButton type="button" aria-label="Scroll up"><svg width="9" height="7" fill="none"><path d="M1 5.500L4.500 2 8 5.500" stroke="#555" strokeWidth="2" /></svg></ScrollButton>
              <Thumb />
              <ScrollButton type="button" aria-label="Scroll down"><svg width="9" height="7" fill="none"><path d="M1 1.500L4.500 5 8 1.500" stroke="#555" strokeWidth="2" /></svg></ScrollButton>
            </Scrollbar>
          </Viewer>
        </Main>
      </Body>

      <StatusBar>
        <StatusText>Modified</StatusText>
        <PageNav>
          <Divider />
          <Tool name="noteBack" label="Previous annotation" />
          <Tool name="noteNext" label="Next annotation" />
          <Divider />
          <Tool name="first" label="First page" />
          <Tool name="prev" label="Previous page" />
          <PageInput aria-label="Page" defaultValue="2 of 5" />
          <Tool name="next" label="Next page" />
          <Tool name="last" label="Last page" />
          <Divider />
          <Tool name="back" label="Back" />
          <Tool name="forward" label="Forward" />
        </PageNav>
        <ViewModes>
          <Tool name="single" label="Single page" />
          <Tool name="continuous" label="Continuous" on />
          <Tool name="grid4" label="Facing continuous" />
          <Tool name="facing" label="Facing" />
        </ViewModes>
      </StatusBar>

      <Taskbar>
        <Task type="button" aria-label="Start"><svg width="18" height="18" viewBox="0 0 18 18" fill="#fff"><path d="M0 3l8-1v7H0zM9 2l9-2v9H9zM0 10h8v7l-8-1zM9 10h9v8l-9-1z" /></svg></Task>
        <Task type="button" aria-label="Task view"><svg width="18" height="18" viewBox="0 0 18 18" fill="none" stroke="#ddd"><path d="M.5 0v3.500h12V0M.5 18v-3.500h12V18M.5 5.500h12v7H.5zM16.500 0v4M16.500 8v10" /><path d="M15 5.500h3" strokeWidth="2" /></svg></Task>
        <Tasks>
          {tasks.map(t => <Task type="button" key={t.label} aria-label={t.label} $state={t.state}>{t.icon}</Task>)}
        </Tasks>
        <Tray>
          <TrayButton type="button" aria-label="Hidden icons" $w={36}><svg width="14" height="8" fill="none" stroke="#ddd"><path d="M1 7l6-6 6 6" /></svg></TrayButton>
          <TrayButton type="button" aria-label="Battery" $w={36}><svg width="18" height="12" viewBox="0 0 18 12" fill="none" stroke="#fff"><path d="M6 3.500h10.500v7H5V8" /><path d="M7 5h8v4H7z" fill="#fff" /><path d="M17.500 5v4M1.500 0v3M4.500 0v3M.5 3.500h5V6l-2 1v4" /></svg></TrayButton>
          <TrayButton type="button" aria-label="Network" $w={36}><svg width="14" height="14" viewBox="0 0 14 14" fill="none" stroke="#ccc"><path d="M1 13C1 6 6 1 13 1M4 13c0-5 4-9 9-9M7 13c0-3 3-6 6-6M10 13c0-2 1-3 3-3" /><path d="M12 12h2v2h-2z" fill="#fff" stroke="none" /></svg></TrayButton>
          <TrayButton type="button" aria-label="Volume" $w={36}><svg width="17" height="13" viewBox="0 0 17 13" fill="none" stroke="#ddd"><path d="M.5 4.500h3L7 1v11L3.500 8.500h-3z" /><path d="M9.500 5v3M11.500 3c2 2 2 5 0 7M13.500 1c3 3 3 8 0 11" stroke="#888" /></svg></TrayButton>
          <TrayButton type="button" aria-label="Pen workspace" $w={43}><svg width="16" height="14" viewBox="0 0 16 14" fill="none" stroke="#eee"><path d="M9 8C4 5 0 8 1 12c3 3 7 1 7-4 0-4 3-8 5-7 2 2-1 4-4 6-3 1-5 4-4 5M9 8c3-1 6-1 6-3-2-2-4 0-6 3M10 8c2 2 3 2 5 1" strokeWidth="1.500" /></svg></TrayButton>
          <TrayButton type="button" aria-label="Touch keyboard" $w={50}><svg width="25" height="14" viewBox="0 0 25 14" fill="none" stroke="#ddd"><path d="M.5.5h24v13H.5z" /><path d="M3 4.500h20M3 7.500h20" strokeDasharray="1 1" /><path d="M3 10.500h2M7 10.500h11M20 10.500h2" /></svg></TrayButton>
          <TrayText type="button" $w={36}>ENG<br />US</TrayText>
          <TrayText type="button" $w={90}>12:24 PM<br />2019-06-11</TrayText>
          <TrayButton type="button" aria-label="Notifications" $w={40}><svg width="19" height="19" viewBox="0 0 19 19" fill="none" stroke="#eee"><path d="M.5.5h18v14H12l-3 3v-3H.5z" /></svg></TrayButton>
        </Tray>
      </Taskbar>
      <CursorHalo />
    </Window>
  );
}
